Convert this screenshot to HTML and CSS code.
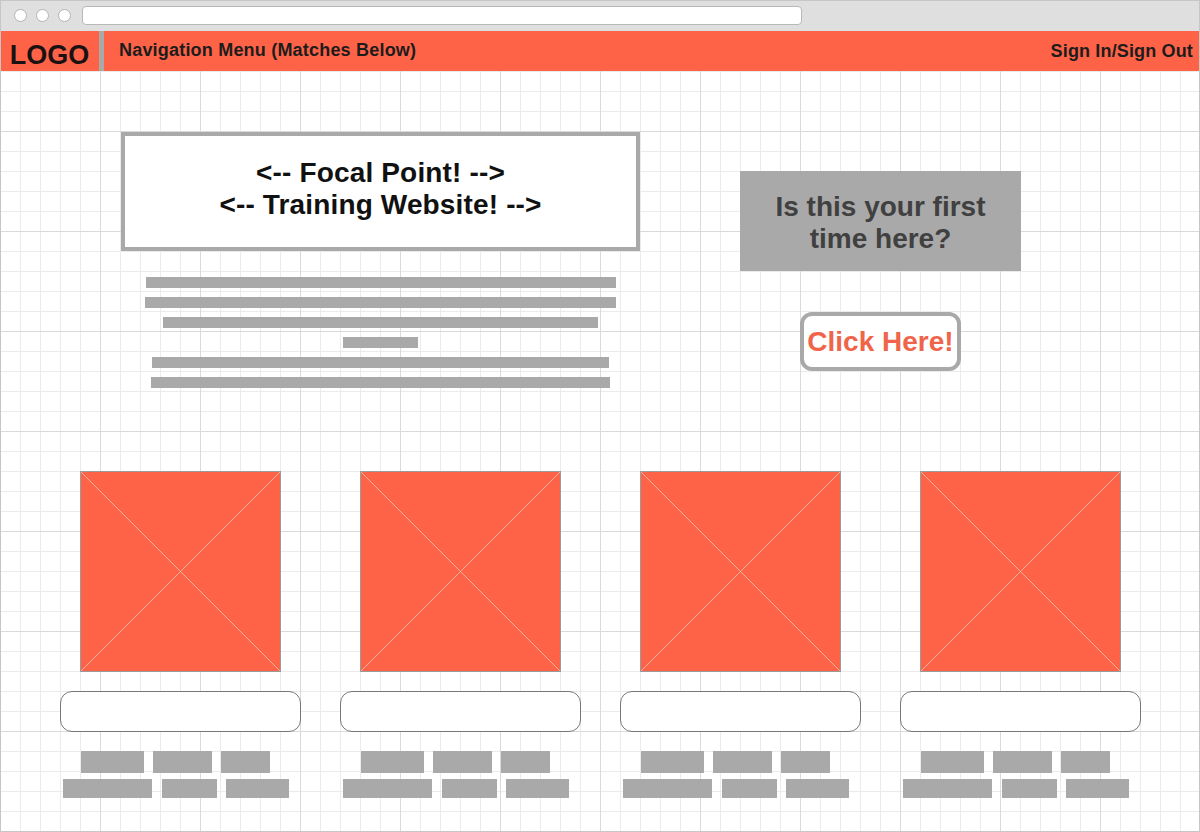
FILE: index.html
```html
<!DOCTYPE html>
<html lang="en">
<head>
<meta charset="utf-8">
<title>Focal Point Training Website Wireframe</title>
<link rel="stylesheet" href="styles.css">
</head>
<body>
<div class="window">
  <div class="chrome">
    <span class="dot"></span><span class="dot"></span><span class="dot"></span>
    <div class="address"></div>
  </div>
  <div class="page">
    <header class="topbar">
      <div class="logo">LOGO</div>
      <div class="sep"></div>
      <div class="nav">Navigation Menu (Matches Below)</div>
      <div class="sign">Sign In/Sign Out</div>
    </header>

    <section class="hero">
      <div class="hero-left">
        <div class="focal">&lt;-- Focal Point! --&gt;<br>&lt;-- Training Website! --&gt;</div>
        <div class="lines">
          <div class="line" style="width:470px"></div>
          <div class="line" style="width:471px"></div>
          <div class="line" style="width:435px"></div>
          <div class="line" style="width:75px"></div>
          <div class="line" style="width:457px"></div>
          <div class="line" style="width:459px"></div>
        </div>
      </div>
      <div class="hero-right">
        <div class="first">Is this your first<br>time here?</div>
        <div class="click">Click Here!</div>
      </div>
    </section>

    <section class="cards">
      <div class="card">
        <div class="pic"><svg viewBox="0 0 200 200" preserveAspectRatio="none"><line x1="0" y1="0" x2="200" y2="200"/><line x1="200" y1="0" x2="0" y2="200"/></svg></div>
        <div class="pill"></div>
        <div class="row row1"><span style="width:63px"></span><span style="width:59px"></span><span style="width:49px"></span></div>
        <div class="row row2"><span style="width:89px"></span><span style="width:55px"></span><span style="width:63px"></span></div>
      </div>
      <div class="card">
        <div class="pic"><svg viewBox="0 0 200 200" preserveAspectRatio="none"><line x1="0" y1="0" x2="200" y2="200"/><line x1="200" y1="0" x2="0" y2="200"/></svg></div>
        <div class="pill"></div>
        <div class="row row1"><span style="width:63px"></span><span style="width:59px"></span><span style="width:49px"></span></div>
        <div class="row row2"><span style="width:89px"></span><span style="width:55px"></span><span style="width:63px"></span></div>
      </div>
      <div class="card">
        <div class="pic"><svg viewBox="0 0 200 200" preserveAspectRatio="none"><line x1="0" y1="0" x2="200" y2="200"/><line x1="200" y1="0" x2="0" y2="200"/></svg></div>
        <div class="pill"></div>
        <div class="row row1"><span style="width:63px"></span><span style="width:59px"></span><span style="width:49px"></span></div>
        <div class="row row2"><span style="width:89px"></span><span style="width:55px"></span><span style="width:63px"></span></div>
      </div>
      <div class="card">
        <div class="pic"><svg viewBox="0 0 200 200" preserveAspectRatio="none"><line x1="0" y1="0" x2="200" y2="200"/><line x1="200" y1="0" x2="0" y2="200"/></svg></div>
        <div class="pill"></div>
        <div class="row row1"><span style="width:63px"></span><span style="width:59px"></span><span style="width:49px"></span></div>
        <div class="row row2"><span style="width:89px"></span><span style="width:55px"></span><span style="width:63px"></span></div>
      </div>
    </section>
  </div>
</div>
</body>
</html>
```

FILE: styles.css
```css
* { box-sizing: border-box; }

html, body {
  margin: 0;
  padding: 0;
  background: #ffffff;
}

body {
  font-family: "Liberation Sans", Arial, sans-serif;
}

.window {
  width: 1200px;
  height: 832px;
  overflow: hidden;
  outline: 1px solid #c6c6c6;
  outline-offset: -1px;
}

/* Browser chrome */
.chrome {
  height: 31px;
  background: #dfdfdf;
  display: flex;
  align-items: center;
  padding-left: 14px;
  gap: 9px;
}

.dot {
  width: 13px;
  height: 13px;
  border-radius: 50%;
  background: #ffffff;
  border: 1px solid #b4b4b4;
  flex: none;
}

.address {
  margin-left: 2px;
  width: 720px;
  height: 19px;
  background: #ffffff;
  border: 1px solid #b8b8b8;
  border-radius: 4px;
}

/* Page area with grid */
.page {
  height: 801px;
  background-color: #ffffff;
  background-image:
    linear-gradient(to right, #dadada 1px, transparent 1px),
    linear-gradient(to bottom, #dadada 1px, transparent 1px),
    linear-gradient(to right, #ebebeb 1px, transparent 1px),
    linear-gradient(to bottom, #ebebeb 1px, transparent 1px);
  background-size: 100px 100px, 100px 100px, 20px 20px, 20px 20px;
}

/* Header */
.topbar {
  height: 40px;
  background: #ff6347;
  display: flex;
  align-items: flex-start;
  color: #1c1c1c;
  font-weight: bold;
}

.logo {
  width: 99px;
  height: 40px;
  padding-top: 8px;
  font-size: 27px;
  line-height: 32px;
  text-align: center;
  color: #1a1212;
}

.sep {
  width: 5px;
  height: 40px;
  background: #a9a9a9;
}

.nav {
  padding-top: 9px;
  padding-left: 15px;
  font-size: 18px;
  line-height: 20px;
  letter-spacing: 0.2px;
  flex: 1;
}

.sign {
  padding-top: 10px;
  padding-right: 7px;
  font-size: 18px;
  line-height: 20px;
  letter-spacing: 0.15px;
}

/* Hero */
.hero {
  display: flex;
  padding-top: 61px;
}

.hero-left {
  margin-left: 121px;
  width: 519px;
  display: flex;
  flex-direction: column;
  align-items: center;
}

.focal {
  width: 519px;
  height: 119px;
  border: 4px solid #a9a9a9;
  background: #ffffff;
  padding-top: 21px;
  text-align: center;
  font-size: 28px;
  font-weight: bold;
  line-height: 32px;
  letter-spacing: 0.15px;
  color: #111111;
}

.lines {
  margin-top: 26px;
  display: flex;
  flex-direction: column;
  align-items: center;
  gap: 9px;
}

.line {
  height: 11px;
  background: #a9a9a9;
}

.hero-right {
  margin-left: 100px;
  width: 281px;
  display: flex;
  flex-direction: column;
  align-items: center;
}

.first {
  margin-top: 39px;
  width: 281px;
  height: 100px;
  background: #a9a9a9;
  padding-top: 20px;
  text-align: center;
  font-size: 28px;
  font-weight: bold;
  line-height: 32px;
  color: #404040;
}

.click {
  margin-top: 41px;
  width: 161px;
  height: 59px;
  border: 4px solid #a9a9a9;
  border-radius: 12px;
  background: #ffffff;
  display: flex;
  align-items: center;
  justify-content: center;
  font-size: 28px;
  font-weight: bold;
  line-height: 32px;
  color: #f0654a;
  white-space: nowrap;
}

/* Cards */
.cards {
  display: flex;
  padding-left: 40px;
  margin-top: 83px;
}

.card {
  width: 280px;
  display: flex;
  flex-direction: column;
}

.pic {
  margin-left: 40px;
  width: 201px;
  height: 201px;
  background: #ff6347;
  border: 1px solid #9a9a9a;
}

.pic svg {
  display: block;
  width: 100%;
  height: 100%;
}

.pic line {
  stroke: #f2b3a3;
  stroke-width: 1;
  vector-effect: non-scaling-stroke;
}

.pill {
  margin-left: 20px;
  margin-top: 19px;
  width: 241px;
  height: 41px;
  border: 1px solid #777777;
  border-radius: 12px;
  background: #ffffff;
}

.row {
  display: flex;
}

.row span {
  display: block;
  background: #a9a9a9;
}

.row1 {
  margin-top: 19px;
  margin-left: 41px;
  gap: 9px;
}

.row1 span { height: 22px; }

.row2 {
  margin-top: 6px;
  margin-left: 23px;
  gap: 10px;
}

.row2 span { height: 19px; }
.row2 span:last-child { margin-left: -1px; }
```
